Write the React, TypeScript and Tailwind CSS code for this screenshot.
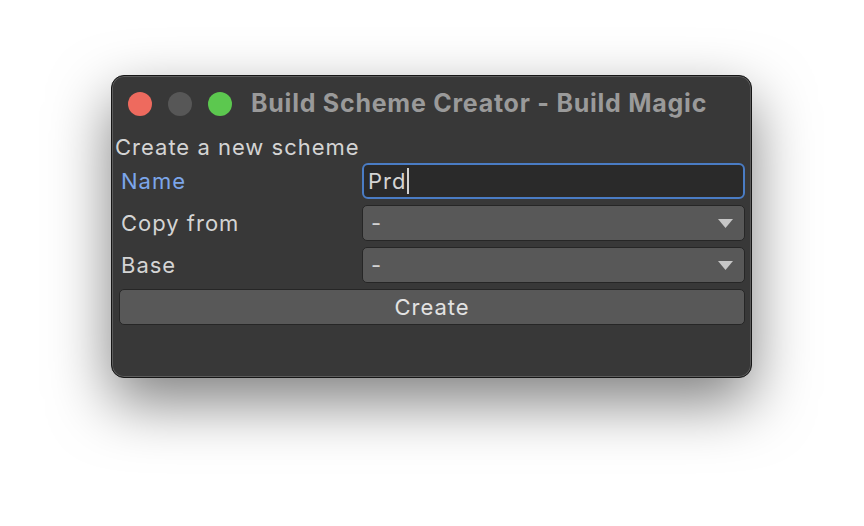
import { useState } from "react";

function Dropdown({ value }: { value: string }) {
  return (
    <div className="flex h-[36px] flex-1 items-center justify-between rounded-[5px] border border-[#262626] bg-[#585858] pr-[11px] pl-[8px] text-[#d2d2d2]">
      <span>{value}</span>
      <svg width="15" height="9" viewBox="0 0 15 9">
        <path d="M0 0 H15 L7.5 9 Z" fill="#c6c6c6" />
      </svg>
    </div>
  );
}

function App() {
  const [name, setName] = useState("Prd");
  return (
    <main className="h-[526px] w-[864px] bg-white pt-[75px] pl-[111px] font-['Inter','Noto_Sans',sans-serif]">
      <div className="flex h-[303px] w-[641px] flex-col rounded-[13px] border border-[#161616] bg-[#383838] shadow-[0_24px_60px_rgba(0,0,0,0.5),inset_0_0_0_1px_#5c5c5c]">
        <div className="flex h-[55px] shrink-0 items-center pl-[16px]">
          <div className="flex gap-[16px]">
            <span className="h-[24px] w-[24px] rounded-full bg-[#ee6a5e]" />
            <span className="h-[24px] w-[24px] rounded-full bg-[#575757]" />
            <span className="h-[24px] w-[24px] rounded-full bg-[#5cc84f]" />
          </div>
          <h1 className="ml-[19px] text-[25px] font-bold tracking-[0.75px] text-[#9a9a9a]">
            Build Scheme Creator - Build Magic
          </h1>
        </div>
        <div className="flex flex-col pr-[6px] pl-[7px] text-[22px] tracking-[1px] text-[#d4d4d4]">
          <p className="ml-[-4px] leading-[32px]">Create a new scheme</p>
          <div className="flex flex-col gap-[6px]">
            <div className="flex items-center">
              <span className="w-[243px] pl-[2px] text-[#7ca6ea]">Name</span>
              <div className="flex h-[36px] flex-1 items-center rounded-[6px] border-2 border-[#4a7cc4] bg-[#2a2a2a] pl-[4px]">
                <span>{name}</span>
                <span className="ml-[1px] h-[26px] w-[2px] bg-[#d2d2d2]" />
                <input className="hidden" value={name} onChange={(e) => setName(e.target.value)} />
              </div>
            </div>
            <div className="flex items-center">
              <span className="w-[243px] pl-[2px]">Copy from</span>
              <Dropdown value="-" />
            </div>
            <div className="flex items-center">
              <span className="w-[243px] pl-[2px]">Base</span>
              <Dropdown value="-" />
            </div>
            <button className="h-[36px] w-full rounded-[5px] border border-[#262626] bg-[#585858] tracking-[1px] text-[#e2e2e2]">
              Create
            </button>
          </div>
        </div>
      </div>
    </main>
  );
}

export default App;
